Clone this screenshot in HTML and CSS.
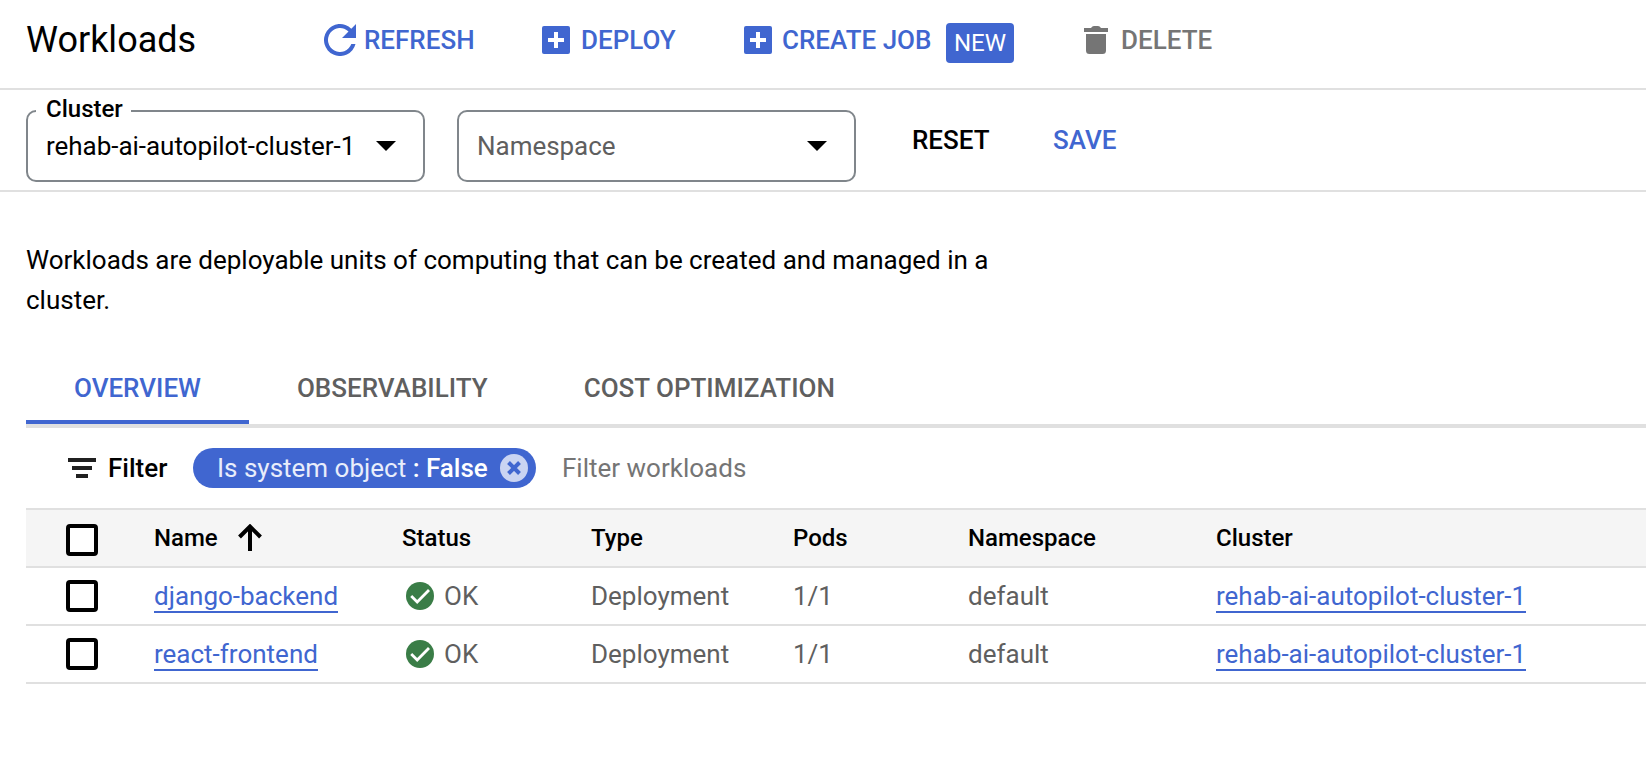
FILE: index.html
```html
<!DOCTYPE html>
<html lang="en">
<head>
<meta charset="utf-8">
<title>Workloads</title>
<link rel="stylesheet" href="styles.css">
</head>
<body>
<header class="toolbar">
  <h1 class="title">Workloads</h1>
  <button class="action refresh">
    <svg width="32" height="32" viewBox="0 0 32 32"><path d="M27.300 4.700A16 16 0 1 0 31.500 20H27.300A12 12 0 1 1 24.500 7.500L18 14H32V0Z" fill="currentColor"/></svg>
    <span>REFRESH</span>
  </button>
  <button class="action deploy">
    <svg width="28" height="28" viewBox="0 0 28 28"><rect width="28" height="28" rx="2" fill="currentColor"/><path d="M12 6h4v6h6v4h-6v6h-4v-6H6v-4h6z" fill="#fff"/></svg>
    <span>DEPLOY</span>
  </button>
  <button class="action create">
    <svg width="28" height="28" viewBox="0 0 28 28"><rect width="28" height="28" rx="2" fill="currentColor"/><path d="M12 6h4v6h6v4h-6v6h-4v-6H6v-4h6z" fill="#fff"/></svg>
    <span>CREATE JOB</span>
  </button>
  <span class="badge">NEW</span>
  <button class="action delete">
    <svg width="24" height="28" viewBox="0 0 24 28"><path d="M0 2h7l1.400-1.500Q9 0 10 0h4q1 0 1.600.5L17 2h7v4H0zM2 8h20v16.500q0 3.500-3.500 3.500h-13Q2 28 2 24.500z" fill="currentColor"/></svg>
    <span>DELETE</span>
  </button>
</header>
<section class="scope">
  <div class="select">
    <span class="select-label">Cluster</span>
    <span class="select-value">rehab-ai-autopilot-cluster-1</span>
    <svg width="20" height="10" viewBox="0 0 20 10"><path d="M0 0h20L10 10z"/></svg>
  </div>
  <div class="select">
    <span class="select-value placeholder">Namespace</span>
    <svg width="20" height="10" viewBox="0 0 20 10"><path d="M0 0h20L10 10z"/></svg>
  </div>
  <button class="text-button reset">RESET</button>
  <button class="text-button save">SAVE</button>
</section>
<main class="content">
  <p class="intro">Workloads are deployable units of computing that can be created and managed in a cluster.</p>
  <nav class="tabs">
    <a class="tab active">OVERVIEW</a>
    <a class="tab">OBSERVABILITY</a>
    <a class="tab">COST OPTIMIZATION</a>
  </nav>
  <div class="filter">
    <svg width="28" height="20" viewBox="0 0 28 20"><path d="M0 0h28v4H0zM4 8h20v4H4zM8 16h12v4H8z" fill="#202020"/></svg>
    <span class="filter-title">Filter</span>
    <span class="chip">
      <span class="chip-text">Is system object <b>: False</b></span>
      <svg width="28" height="28" viewBox="0 0 28 28"><circle cx="14" cy="14" r="14" fill="#cad4f2"/><path d="M8.500 8.500l11 11M19.500 8.500l-11 11" stroke="#4066d0" stroke-width="4"/></svg>
    </span>
    <span class="filter-hint">Filter workloads</span>
  </div>
  <div class="table">
    <div class="row head">
      <span class="check"></span>
      <span class="name-head">Name
        <svg width="24" height="28" viewBox="0 0 24 28"><path d="M12 27V3M1.500 13L12 2.500L22.500 13" fill="none" stroke="#000" stroke-width="4"/></svg>
      </span>
      <span>Status</span><span>Type</span><span>Pods</span><span>Namespace</span><span>Cluster</span>
    </div>
    <div class="row">
      <span class="check"></span>
      <span><a class="link">django-backend</a></span>
      <span class="status"><svg width="28" height="28" viewBox="0 0 28 28"><circle cx="14" cy="14" r="14" fill="#3a7d47"/><path d="M5.200 14l6 6L23 8" fill="none" stroke="#fff" stroke-width="2.800"/></svg>OK</span>
      <span>Deployment</span><span>1/1</span><span>default</span>
      <span><a class="link">rehab-ai-autopilot-cluster-1</a></span>
    </div>
    <div class="row">
      <span class="check"></span>
      <span><a class="link">react-frontend</a></span>
      <span class="status"><svg width="28" height="28" viewBox="0 0 28 28"><circle cx="14" cy="14" r="14" fill="#3a7d47"/><path d="M5.200 14l6 6L23 8" fill="none" stroke="#fff" stroke-width="2.800"/></svg>OK</span>
      <span>Deployment</span><span>1/1</span><span>default</span>
      <span><a class="link">rehab-ai-autopilot-cluster-1</a></span>
    </div>
  </div>
</main>
</body>
</html>
```
FILE: styles.css
```css
* { box-sizing: border-box; }
body {
  margin: 0;
  background: #fff;
  color: #000;
  font: 400 26px/32px Roboto, sans-serif;
  white-space: nowrap;
  overflow: hidden;
}
svg { display: block; flex: none; }
button {
  border: 0;
  padding: 0;
  background: none;
  font: inherit;
  font-weight: 500;
}
.toolbar {
  display: flex;
  height: 90px;
  padding: 0 0 8px 26px;
  align-items: center;
  border-bottom: 2px solid #e0e0e0;
}
.title {
  width: 298px;
  margin: 0;
  font-size: 36px;
  line-height: 40px;
  font-weight: 400;
}
.action {
  display: flex;
  align-items: center;
  color: #4066d0;
}
.refresh { width: 218px; gap: 8px; }
.deploy { width: 202px; gap: 11px; }
.create { width: 202px; gap: 10px; }
.delete { gap: 13px; color: #757575; }
.badge {
  width: 68px;
  height: 40px;
  margin: 6px 70px 0 0;
  border-radius: 4px;
  background: #4066d0;
  color: #fff;
  font-size: 24px;
  line-height: 40px;
  text-align: center;
}
.scope {
  display: flex;
  height: 102px;
  padding: 20px 0 0 26px;
  border-bottom: 2px solid #e0e0e0;
}
.select {
  position: relative;
  display: flex;
  width: 399px;
  height: 72px;
  margin-right: 32px;
  padding: 0 27px 0 18px;
  align-items: center;
  justify-content: space-between;
  border: 2px solid #80868b;
  border-radius: 10px;
}
.select-label {
  position: absolute;
  top: -19px;
  left: 8px;
  padding: 0 8px 0 10px;
  background: #fff;
  font-size: 24px;
  font-weight: 500;
}
.select-value { letter-spacing: -0.03px; }
.placeholder { color: #5f5f5f; }
.text-button { height: 32px; margin-top: 14px; }
.reset { width: 141px; margin-left: 24px; text-align: left; }
.save { color: #4066d0; }
.content { padding-left: 26px; }
.intro {
  width: 980px;
  height: 80px;
  margin: 48px 0 0;
  line-height: 40px;
  white-space: normal;
}
.tabs {
  display: flex;
  height: 76px;
  margin-top: 32px;
  border-bottom: 4px solid #e0e0e0;
}
.tab {
  height: 72px;
  padding: 20px 48px 0;
  color: #5f5f5f;
  font-weight: 500;
}
.active { border-bottom: 4px solid #4066d0; color: #4066d0; }
.filter {
  display: flex;
  height: 80px;
  padding-left: 42px;
  align-items: center;
}
.filter-title { width: 85px; margin-left: 12px; font-weight: 500; }
.chip {
  display: flex;
  width: 343px;
  height: 40px;
  margin-right: 26px;
  padding: 0 8px 0 24px;
  align-items: center;
  justify-content: space-between;
  border-radius: 20px;
  background: #4066d0;
  color: #e8edfb;
}
.chip b { color: #fff; font-weight: 500; }
.filter-hint { color: #757575; }
.table { border-top: 2px solid #e0e0e0; }
.row {
  display: grid;
  height: 58px;
  padding-left: 40px;
  grid-template-columns: 88px 248px 189px 202px 175px 248px 1fr;
  align-items: center;
  border-bottom: 2px solid #e0e0e0;
  color: #5f5f5f;
}
.head {
  background: #f5f5f5;
  color: #000;
  font-size: 24px;
  font-weight: 500;
}
.check {
  width: 32px;
  height: 32px;
  border: 4px solid #000;
  border-radius: 4px;
  background: #fff;
}
.head .check { margin-top: 4px; }
.name-head { display: flex; gap: 20px; align-items: center; }
.link {
  display: inline-block;
  height: 33px;
  border-bottom: 2px solid #4066d0;
  color: #4066d0;
}
.status { display: flex; padding-left: 4px; gap: 10px; align-items: center; }
```
